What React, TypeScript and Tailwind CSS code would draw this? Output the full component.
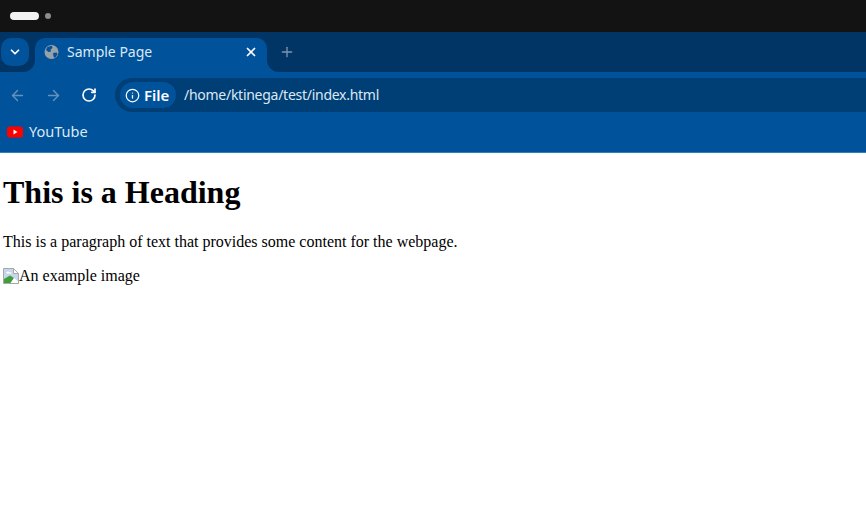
import React from 'react';
import { ArrowLeft, ArrowRight, ChevronDown, Info, Plus, RotateCw, X } from 'lucide-react';

const uiFont = "font-['Noto_Sans',sans-serif]";

function GlobeIcon() {
  return (
    <svg width="16" height="16" viewBox="0 0 16 16" className="shrink-0">
      <circle cx="7.5" cy="8" r="7" fill="#98a0a8" />
      <path d="M3 3.5c1.5-1 3-1.5 5-1.5l.5 2-2 1.5.5 2-2.5.5L2 6zM9 9l3.5-.5 1.2 1.5L11 14l-1.5-1.5z" fill="#00529b" />
    </svg>
  );
}

function YouTubeIcon() {
  return (
    <svg width="16" height="12" viewBox="0 0 16 12" className="shrink-0">
      <rect width="16" height="11" y="0.5" rx="2.5" fill="#ff0000" />
      <path d="M6.5 3.5 10.5 6 6.5 8.5z" fill="#fff" />
    </svg>
  );
}

function BrokenImageIcon() {
  return (
    <svg width="16" height="16" viewBox="0 0 16 16" className="shrink-0">
      <path d="M0.5 0.5h10l5 5v10h-15z" fill="#c5d6ee" stroke="#a8a8a8" />
      <path d="M10.5 0.5v5h5z" fill="#fff" stroke="#a8a8a8" />
      <path d="M3 4.5l2-1 3 1 1 1H4z" fill="#fff" />
      <path d="M1 15v-4l6-3.5 4 2.5-3 5z" fill="#3f9e35" />
      <path d="M7.5 15l3.5-5 4 3v2z" fill="#fff" />
    </svg>
  );
}

export default function App() {
  return (
    <div className="w-[866px] h-[523px] bg-white overflow-hidden flex flex-col">
      <div className="h-8 bg-[#131313] flex items-center gap-[6px] pl-[10px] pb-[1px]">
        <div className="w-[29px] h-2 rounded-full bg-[#f2f2f2]" />
        <div className="w-[6px] h-[6px] rounded-full bg-[#8c8c8c]" />
      </div>

      <div className={`h-10 bg-[#00529b] flex ${uiFont}`}>
        <div className="w-[35px] bg-[#003566] rounded-br-[12px] pt-[6px] pl-[1px]">
          <div className="w-7 h-7 rounded-[10px] bg-[#00529b] flex items-center justify-center">
            <ChevronDown size={14} strokeWidth={3} className="text-white" />
          </div>
        </div>
        <div className="w-[232px] bg-[#003566] pt-[6px]">
          <div className="h-[34px] bg-[#00529b] rounded-t-[10px] flex items-center pl-[9px] pr-[9px] pb-[7px]">
            <GlobeIcon />
            <span className="ml-[7px] text-[14px] text-[#dce8f3] flex-1">Sample Page</span>
            <X size={14} strokeWidth={3} className="text-white" />
          </div>
        </div>
        <div className="flex-1 bg-[#003566] rounded-bl-[12px] pl-[12px] flex items-center">
          <Plus size={16} strokeWidth={2} className="text-[#7d94ad]" />
        </div>
      </div>

      <div className={`h-10 bg-[#00529b] flex items-center pt-[6px] ${uiFont}`}>
        <div className="w-[35px] flex justify-center">
          <ArrowLeft size={17} className="text-[#6592bd]" />
        </div>
        <div className="w-[36px] flex justify-center">
          <ArrowRight size={17} className="text-[#6592bd]" />
        </div>
        <div className="w-[36px] flex justify-center">
          <RotateCw size={16} strokeWidth={2.5} className="text-white" />
        </div>
        <div className="ml-[8px] flex-1 h-[34px] bg-[#003f76] rounded-l-full flex items-center pl-[5px]">
          <div className="h-[26px] w-[56px] rounded-full bg-[#00529b] flex items-center pl-[5px] gap-[4px]">
            <Info size={15} strokeWidth={2} className="text-white" />
            <span className="text-[15px] leading-[20px] pb-[1px] font-semibold text-white">File</span>
          </div>
          <span className="ml-[8px] pb-[1px] text-[14px] tracking-[-0.27px] text-[#dce8f3]">/home/ktinega/test/index.html</span>
        </div>
      </div>

      <div className={`h-[41px] bg-[#00529b] border-b border-[#2f7fc0] flex items-center pl-[7px] pb-[1px] gap-[6px] ${uiFont}`}>
        <YouTubeIcon />
        <span className="text-[14.5px] text-[#dce8f3]">YouTube</span>
      </div>

      <div className="px-[3px] font-['Liberation_Serif',serif] text-[16px] leading-[18px] text-black">
        <h1 className="text-[32px] leading-[37px] font-bold mt-[21px]">This is a Heading</h1>
        <p className="mt-[22px]">This is a paragraph of text that provides some content for the webpage.</p>
        <div className="mt-4 flex items-center">
          <BrokenImageIcon />
          <span>An example image</span>
        </div>
      </div>
    </div>
  );
}
